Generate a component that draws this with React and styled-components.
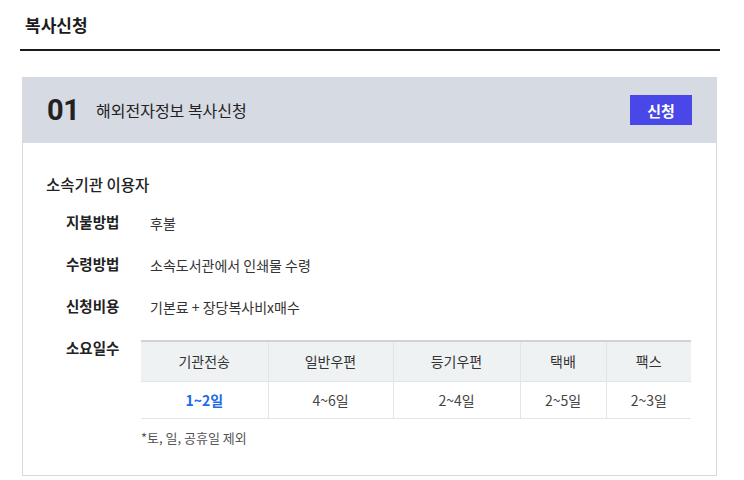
import React from 'react'
import styled, { createGlobalStyle } from 'styled-components'

const GlobalStyle = createGlobalStyle`
  body {
    margin: 0;
    background: #fff;
    font-family: "Noto Sans CJK KR", "Noto Sans", sans-serif;
    color: #222;
  }
`;

const Page = styled.div`
  padding: 0 24px 0 20px;
  width: 700px;
`;

const PageTitle = styled.h2`
  margin: 0;
  height: 49px;
  display: flex;
  align-items: center;
  padding-left: 5px;
  font-size: 17px;
  font-weight: 700;
  color: #1c1c1c;
  border-bottom: 2px solid #1a1a1a;
`;

const Card = styled.section`
  margin: 26px 3px 0 2px;
  border: 1px solid #d9d9d9;
  border-top: none;
`;

const CardHeader = styled.div`
  height: 66px;
  background: #d6dae2;
  display: flex;
  align-items: center;
  padding: 0 24px 0 24px;
`;

const Num = styled.span`
  font-family: "Roboto", sans-serif;
  font-size: 29px;
  font-weight: 700;
  color: #222;
  width: 49px;
  letter-spacing: -0.5px;
`;

const CardTitle = styled.span`
  font-size: 16px;
  color: #222;
  flex: 1;
`;

const ApplyButton = styled.button`
  width: 62px;
  height: 30px;
  margin-left: 1px;
  border: none;
  background: #4a47e8;
  color: #fff;
  font-family: inherit;
  font-size: 15px;
  font-weight: 700;
  cursor: pointer;
`;

const CardBody = styled.div`
  padding: 30px 24px 26px 23px;
`;

const GroupTitle = styled.h3`
  margin: 0 0 17px;
  font-size: 15.5px;
  font-weight: 500;
  color: #222;
`;

const InfoRow = styled.div`
  display: flex;
  align-items: flex-start;
  padding-left: 20px;
  min-height: 42px;
`;

const Label = styled.span`
  width: 84px;
  flex-shrink: 0;
  font-size: 14.5px;
  font-weight: 700;
  color: #222;
  line-height: 20px;
`;

const Value = styled.div`
  font-size: 14px;
  color: #333;
  line-height: 22px;
  flex: 1;
`;

const Table = styled.table`
  margin: 2px 0 0 -9px;
  width: 550px;
  border-collapse: collapse;
  border-top: 2px solid #cfd3d6;
  font-size: 14px;
  line-height: 20px;
`;

const Th = styled.th`
  box-sizing: border-box;
  height: 40px;
  padding: 0;
  background: #eff2f3;
  font-weight: 400;
  color: #333;
  border-left: 1px solid #e2e5e8;
  border-bottom: 1px solid #e2e5e8;
  width: ${({ w }) => w}px;
  &:first-child { border-left: none; }
`;

const Td = styled.td`
  box-sizing: border-box;
  height: 37px;
  padding: 0;
  text-align: center;
  color: ${({ hl }) => (hl ? '#1f6ae8' : '#444')};
  font-weight: ${({ hl }) => (hl ? 700 : 400)};
  border-left: 1px solid #e2e5e8;
  border-bottom: 1px solid #e2e5e8;
  &:first-child { border-left: none; }
`;

const Note = styled.p`
  margin: 8px 0 0 -9px;
  font-size: 13px;
  color: #555;
`;

const rows = [
  ['지불방법', '후불'],
  ['수령방법', '소속도서관에서 인쇄물 수령'],
  ['신청비용', '기본료 + 장당복사비x매수'],
];

const cols = [
  ['기관전송', '1~2일', 127],
  ['일반우편', '4~6일', 125],
  ['등기우편', '2~4일', 127],
  ['택배', '2~5일', 86],
  ['팩스', '2~3일', 85],
];

export default function App() {
  return (
    <>
      <GlobalStyle />
      <Page>
        <PageTitle>복사신청</PageTitle>
        <Card>
          <CardHeader>
            <Num>01</Num>
            <CardTitle>해외전자정보 복사신청</CardTitle>
            <ApplyButton>신청</ApplyButton>
          </CardHeader>
          <CardBody>
            <GroupTitle>소속기관 이용자</GroupTitle>
            {rows.map(([l, v]) => (
              <InfoRow key={l}>
                <Label>{l}</Label>
                <Value>{v}</Value>
              </InfoRow>
            ))}
            <InfoRow>
              <Label>소요일수</Label>
              <Value>
                <Table>
                  <thead>
                    <tr>
                      {cols.map(([h, , w]) => (
                        <Th key={h} w={w}>{h}</Th>
                      ))}
                    </tr>
                  </thead>
                  <tbody>
                    <tr>
                      {cols.map(([h, d], i) => (
                        <Td key={h} hl={i === 0}>{d}</Td>
                      ))}
                    </tr>
                  </tbody>
                </Table>
                <Note>*토, 일, 공휴일 제외</Note>
              </Value>
            </InfoRow>
          </CardBody>
        </Card>
      </Page>
    </>
  )
}
